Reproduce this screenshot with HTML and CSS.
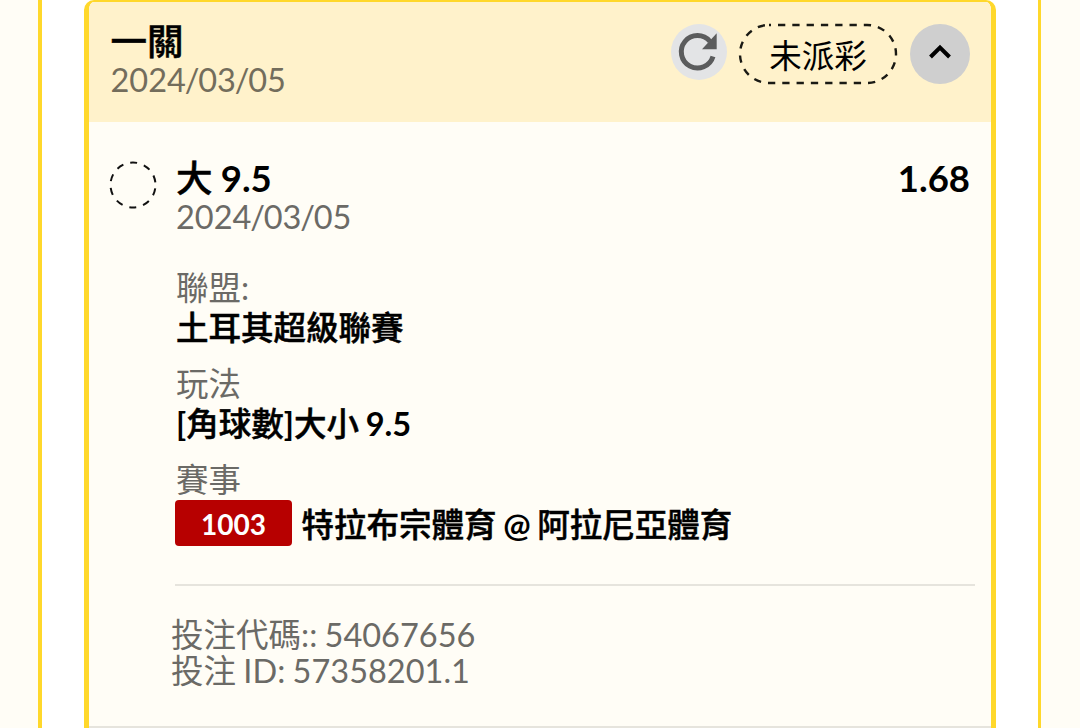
FILE: index.html
```
<!DOCTYPE html>
<html lang="zh-Hant">
<head>
    <meta charset="UTF-8">
    <meta name="viewport" content="width=device-width, initial-scale=1.0">
    <title>投注紀錄</title>
    <link rel="stylesheet" href="styles.css">
</head>
<body>

    <div class="slip">
        <div class="card">
            <div class="card-header">
                <div>
                    <div class="title">一關</div>
                    <div class="date">2024<i>/</i>03<i>/</i>05</div>
                </div>
                <div class="actions">
                    <button class="refresh" aria-label="重新整理">
                        <svg width="56" height="56" viewBox="0 0 56 56">
                            <path d="M39 17.500A16.200 16.200 0 1 0 42 32.500" fill="none" stroke="#5b5c5d" stroke-width="5"/>
                            <path d="M45.700 9.200V25.300H31Z" fill="#5b5c5d"/>
                        </svg>
                    </button>
                    <div class="status">
                        <svg class="status-outline" width="160" height="62" viewBox="0 0 160 62">
                            <rect x="2" y="2" width="156" height="58" rx="29" fill="none" stroke="#1a1a14" stroke-width="2.4" stroke-dasharray="7.3 7" stroke-dashoffset="5.3"/>
                        </svg>
                        <span>未派彩</span>
                    </div>
                    <button class="toggle" aria-label="收合">
                        <svg width="60" height="60" viewBox="0 0 60 60">
                            <path d="M20.500 33L30 23.500L39.500 33" fill="none" stroke="#000" stroke-width="4"/>
                        </svg>
                    </button>
                </div>
            </div>

            <div class="bet">
                <svg class="pending" width="48" height="48" viewBox="0 0 48 48">
                    <circle cx="24" cy="24" r="22.500" fill="none" stroke="#111" stroke-width="2" stroke-dasharray="7.100 7.037" stroke-dashoffset="-3.500"/>
                </svg>
                <div class="bet-info">
                    <div class="bet-top">
                        <div class="title">大 <b>9.5</b></div>
                        <div class="odds">1.68</div>
                    </div>
                    <div class="date">2024<i>/</i>03<i>/</i>05</div>

                    <div class="field">
                        <div class="label">聯盟:</div>
                        <div class="value">土耳其超級聯賽</div>
                    </div>
                    <div class="field">
                        <div class="label">玩法</div>
                        <div class="value"><b>[</b>角球數<b>]</b>大小 <b>9.5</b></div>
                    </div>
                    <div class="field">
                        <div class="label">賽事</div>
                        <div class="match">
                            <span class="match-number">1003</span>
                            <span class="value">特拉布宗體育 <b>@</b> 阿拉尼亞體育</span>
                        </div>
                    </div>

                    <div class="codes">
                        <div>投注代碼:: 54067656</div>
                        <div>投注 ID: 57358201.1</div>
                    </div>
                </div>
            </div>
        </div>
    </div>

</body>
</html>
```
FILE: styles.css
```
* {
    box-sizing: border-box;
}
body {
    margin: 0;
    background-color: #fffdf6;
    color: #000;
    font-family: Lato, "Noto Sans CJK TC", sans-serif;
    font-size: 32.5px;
    height: 728px;
    overflow: hidden;
}
.slip {
    height: 728px;
    margin: 0 39px 0 38px;
    padding: 0 42px;
    background-color: white;
    border-left: 4px solid #ffd82b;
    border-right: 3px solid #ffd82b;
}
.card {
    height: 740px;
    background-color: #fffdf6;
    border: 5px solid #ffd82b;
    border-top-width: 2px;
    border-radius: 10px;
    overflow: hidden;
}
.card-header {
    display: flex;
    justify-content: space-between;
    height: 120px;
    padding: 20px 21px 0 21.5px;
    background-color: #fff2cb;
}
.title {
    font-size: 36.5px;
    font-weight: 500;
    line-height: 38px;
    word-spacing: -1px;
    -webkit-text-stroke: 0.5px #000;
}
.title b, .value b {
    -webkit-text-stroke: 0;
}
.date {
    color: #6b6a66;
    line-height: 40px;
}
.date i {
    margin: 0 -1.2px;
    font-style: normal;
}
.card-header .date {
    color: #736d5c;
}
.actions {
    display: flex;
    align-items: flex-start;
}
.actions button {
    display: block;
    padding: 0;
    border: none;
    border-radius: 50%;
    cursor: pointer;
}
.actions svg {
    display: block;
}
.actions .refresh {
    width: 56px;
    height: 56px;
    margin: 2px 11px 0 0;
    background-color: #e3e4e6;
}
.status {
    position: relative;
    width: 160px;
    height: 62px;
    margin: 1px 12px 0 0;
    text-align: center;
    line-height: 66px;
}
.status-outline {
    position: absolute;
    left: 0;
    top: 0;
}
.actions .toggle {
    width: 60px;
    height: 60px;
    margin-top: 2px;
    background-color: #cfcfcf;
}
.bet {
    display: flex;
    height: 606px;
    padding: 37px 16px 0 20px;
    border-bottom: 2px solid #e6e4dd;
}
.pending {
    flex: none;
    margin: 2px 19px 0 0;
}
.bet-info {
    flex: 1;
}
.bet-top {
    display: flex;
    justify-content: space-between;
}
.odds {
    margin-right: 5px;
    font-size: 36.5px;
    font-weight: bold;
    line-height: 38px;
}
.field {
    margin-top: 15px;
    line-height: 40px;
}
.field + .field {
    margin-top: 16px;
}
.date + .field {
    margin-top: 31px;
}
.label {
    color: #6b6a66;
}
.value {
    font-weight: 500;
    word-spacing: -1.5px;
    -webkit-text-stroke: 0.5px #000;
}
.match {
    display: flex;
    align-items: center;
    gap: 9.5px;
    margin-left: -1px;
}
.match .value {
    padding-top: 4px;
}
.match-number {
    width: 117px;
    height: 46px;
    background-color: #b70000;
    border-radius: 4px;
    color: white;
    font-size: 28px;
    font-weight: bold;
    line-height: 48px;
    text-align: center;
}
.codes {
    margin: 38px 0 0 -1px;
    padding-top: 31px;
    border-top: 2px solid #e6e4dd;
    color: #6b6a66;
    line-height: 36px;
    word-spacing: -1px;
}
.codes div {
    margin-left: -4px;
}
```
